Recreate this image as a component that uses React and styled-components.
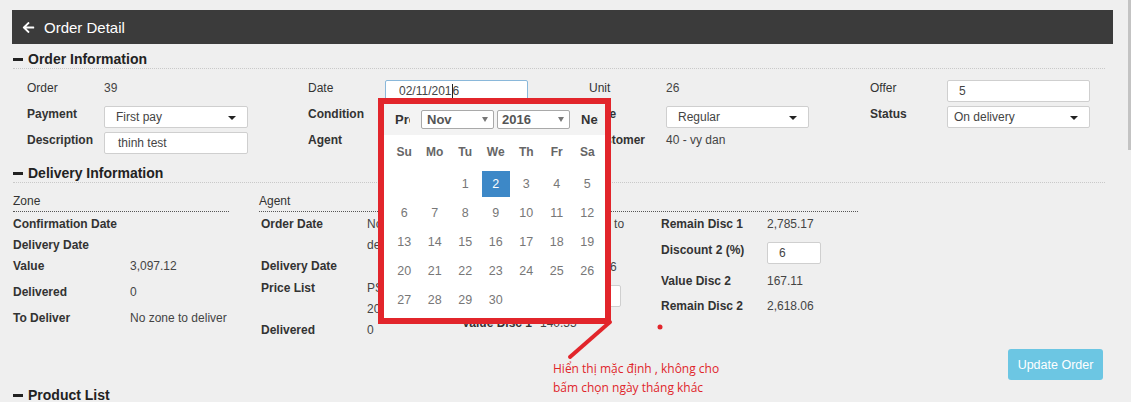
import React from "react"
import styled, { createGlobalStyle } from "styled-components"
import { FaArrowLeft } from "react-icons/fa"

const GlobalStyle = createGlobalStyle`
  html, body {
    margin: 0;
    padding: 0;
    overflow: hidden;
    background: #efefef;
  }
  body {
    font-family: "Liberation Sans", Arial, sans-serif;
    font-size: 12px;
    color: #333;
  }
`

const Page = styled.div`
  position: relative;
  width: 1131px;
  height: 402px;
  padding: 10px 18px 0 12px;
  box-sizing: border-box;
`

const TopBar = styled.div`
  display: flex;
  align-items: center;
  gap: 9px;
  height: 34px;
  padding-left: 10px;
  background: #3b3b3b;
  color: #fff;
  font-size: 15px;
`

const SectionTitle = styled.div`
  display: flex;
  align-items: center;
  gap: 5px;
  margin: ${p => p.$mt}px 8px 0 1px;
  line-height: 18px;
  font-size: 14px;
  font-weight: 700;
  color: #222;
  border-bottom: 1px dotted #c9c9c9;
`

const Minus = styled.span`
  display: inline-block;
  width: 10px;
  height: 3px;
  background: #222;
`

const OrderGrid = styled.div`
  display: grid;
  grid-template-columns: 77px 204px 77px 204px 77px 204px 77px 143px;
  grid-auto-rows: 22px;
  row-gap: 4px;
  margin: 11px 0 0 15px;
`

const Label = styled.div`
  line-height: 16px;
  font-weight: ${p => (p.$light ? 400 : 700)};
  color: #333;
`

const Value = styled.div`
  line-height: 16px;
  color: #444;
`

const Field = styled.div`
  position: relative;
  display: flex;
  align-items: center;
  width: ${p => p.$w || 143}px;
  height: 22px;
  margin-top: ${p => p.$mt || 0}px;
  padding-left: ${p => p.$pad || 11}px;
  box-sizing: border-box;
  background: #fff;
  border: 1px solid ${p => (p.$focus ? "#8ab8da" : "#cfcfcf")};
  border-radius: 2px;
  color: #444;
  white-space: nowrap;
  &::after {
    content: "";
    display: ${p => (p.$select ? "block" : "none")};
    position: absolute;
    right: 11px;
    top: 9px;
    border-left: 4px solid transparent;
    border-right: 4px solid transparent;
    border-top: 4px solid #222;
  }
`

const TextCaret = styled.span`
  display: inline-block;
  width: 1px;
  height: 14px;
  background: #222;
`

const DateCell = styled.div`
  position: relative;
`

const PickerFrame = styled.div`
  position: absolute;
  left: -7px;
  top: 18px;
  z-index: 10;
  width: 221px;
  background: #fff;
  border: 6px solid #e2252b;
`

const PickerHead = styled.div`
  display: flex;
  align-items: center;
  height: 31px;
  padding-left: 11px;
  background: #f3f3f3;
`

const NavLink = styled.span`
  width: ${p => p.$w}px;
  margin-right: ${p => p.$mr || 0}px;
  overflow: hidden;
  white-space: nowrap;
  font-size: 13px;
  font-weight: 700;
  color: #333;
`

const PickerSelect = styled.div`
  position: relative;
  width: 73px;
  height: 19px;
  margin-right: ${p => p.$mr}px;
  padding-left: ${p => p.$pad}px;
  box-sizing: border-box;
  line-height: 17px;
  background: #fff;
  border: 1px solid #a9a9a9;
  border-radius: 2px;
  font-size: 13px;
  font-weight: 700;
  color: #555;
  &::after {
    content: "";
    position: absolute;
    right: 5px;
    top: 6px;
    border-left: 3px solid transparent;
    border-right: 3px solid transparent;
    border-top: 5px solid #777;
  }
`

const WeekRow = styled.div`
  display: grid;
  grid-template-columns: repeat(7, 30.5px);
  height: 34px;
  align-items: center;
  padding-left: 5px;
  font-weight: 700;
  color: #666;
  text-align: center;
`

const DayGrid = styled.div`
  display: grid;
  grid-template-columns: repeat(7, 30.5px);
  grid-auto-rows: 29px;
  padding: 0 0 4px 5px;
`

const Day = styled.span`
  display: flex;
  align-items: center;
  justify-content: center;
  justify-self: center;
  align-self: center;
  width: 28px;
  height: 26px;
  font-size: 12.5px;
  color: ${p => (p.$active ? "#fff" : "#777")};
  background: ${p => (p.$active ? "#3d88c7" : "transparent")};
`

const Delivery = styled.div`
  display: flex;
  margin: 10px 0 0 1px;
`

const ZoneBlock = styled.div`
  width: 216px;
  margin-right: 30px;
`

const AgentBlock = styled.div`
  width: 599px;
`

const ColHead = styled.div`
  line-height: 16px;
  padding-bottom: 2px;
  margin-bottom: 2px;
  color: #333;
  border-bottom: 1px dotted #555;
`

const SubCols = styled.div`
  display: grid;
  grid-template-columns: 201px 199px 199px;
  padding-left: 2px;
`

const InfoRow = styled.div`
  display: grid;
  grid-template-columns: ${p => p.$lw}px auto;
  align-items: start;
  height: ${p => p.$h}px;
  line-height: 21px;
`

const RowLabel = styled.span`
  font-weight: 700;
  color: #333;
  white-space: nowrap;
`

const RowValue = styled.span`
  max-width: 90px;
  color: #444;
  white-space: ${p => (p.$wrap ? "normal" : "nowrap")};
`

const Actions = styled.div`
  display: flex;
  justify-content: flex-end;
  margin-top: 8px;
  padding-right: 10px;
`

const UpdateButton = styled.button`
  width: 95px;
  height: 31px;
  border: none;
  border-radius: 3px;
  background: #6cc6e3;
  color: #fff;
  font-family: "Liberation Sans", Arial, sans-serif;
  font-size: 12.5px;
`

const Markup = styled.svg`
  position: absolute;
  left: 560px;
  top: 312px;
  overflow: visible;
`

const Note = styled.div`
  position: absolute;
  left: 553px;
  top: 359px;
  line-height: 19px;
  font-family: "Open Sans", "Noto Sans", sans-serif;
  font-size: 12px;
  color: #e0262b;
`

const ScrollThumb = styled.div`
  position: absolute;
  right: 0;
  top: 0;
  width: 3px;
  height: 150px;
  background: #c3c3c3;
`

const weeks = [
  [null, null, 1, 2, 3, 4, 5],
  [6, 7, 8, 9, 10, 11, 12],
  [13, 14, 15, 16, 17, 18, 19],
  [20, 21, 22, 23, 24, 25, 26],
  [27, 28, 29, 30],
]

function DatePicker() {
  return (
    <PickerFrame>
      <PickerHead>
        <NavLink $w={15} $mr={11}>Prev</NavLink>
        <PickerSelect $mr={3} $pad={5}>Nov</PickerSelect>
        <PickerSelect $mr={11} $pad={4}>2016</PickerSelect>
        <NavLink $w={17}>Next</NavLink>
      </PickerHead>
      <WeekRow>
        {["Su", "Mo", "Tu", "We", "Th", "Fr", "Sa"].map(d => (
          <span key={d}>{d}</span>
        ))}
      </WeekRow>
      <DayGrid>
        {weeks.flat().map((d, i) => (
          <Day key={i} $active={d === 2}>{d}</Day>
        ))}
      </DayGrid>
    </PickerFrame>
  )
}

function Row({ lw, h, label, children, wrap }) {
  return (
    <InfoRow $lw={lw} $h={h}>
      <RowLabel>{label}</RowLabel>
      <RowValue $wrap={wrap}>{children}</RowValue>
    </InfoRow>
  )
}

export default function App() {
  return (
    <>
      <GlobalStyle />
      <Page>
        <TopBar>
          <FaArrowLeft size={13} />
          <span>Order Detail</span>
        </TopBar>

        <SectionTitle $mt={6}><Minus />Order Information</SectionTitle>
        <OrderGrid>
          <Label $light>Order</Label>
          <Value>39</Value>
          <Label $light>Date</Label>
          <DateCell>
            <Field $focus $pad={13}>02/11/201<TextCaret />6</Field>
            <DatePicker />
          </DateCell>
          <Label $light>Unit</Label>
          <Value>26</Value>
          <Label $light>Offer</Label>
          <Field>5</Field>

          <Label>Payment</Label>
          <Field $select $w={144}>First pay</Field>
          <Label>Condition</Label>
          <Value />
          <Label>Type</Label>
          <Field $select>Regular</Field>
          <Label>Status</Label>
          <Field $select $pad={6}>On delivery</Field>

          <Label>Description</Label>
          <Field $w={144} $pad={13}>thinh test</Field>
          <Label>Agent</Label>
          <Value />
          <Label>Customer</Label>
          <Value>40 - vy dan</Value>
        </OrderGrid>

        <SectionTitle $mt={10}><Minus />Delivery Information</SectionTitle>
        <Delivery>
          <ZoneBlock>
            <ColHead>Zone</ColHead>
            <Row lw={117} h={21} label="Confirmation Date" />
            <Row lw={117} h={21} label="Delivery Date" />
            <Row lw={117} h={26} label="Value">3,097.12</Row>
            <Row lw={117} h={26} label="Delivered">0</Row>
            <Row lw={117} h={26} label="To Deliver">No zone to deliver</Row>
          </ZoneBlock>
          <AgentBlock>
            <ColHead>Agent</ColHead>
            <SubCols>
              <div>
                <Row lw={106} h={42} label="Order Date" wrap>No date delivered</Row>
                <Row lw={106} h={22} label="Delivery Date" />
                <Row lw={106} h={42} label="Price List" wrap>PSI Price List 2016</Row>
                <Row lw={106} h={21} label="Delivered">0</Row>
              </div>
              <div>
                <Row lw={78} h={43} wrap>No zone able to deliver</Row>
                <Row lw={78} h={29}>1,858,520.676</Row>
                <InfoRow $lw={78} $h={27}>
                  <RowLabel />
                  <Field $w={81} $mt={-1} />
                </InfoRow>
                <Row lw={78} h={21} label="Value Disc 1">140.55</Row>
              </div>
              <div>
                <Row lw={106} h={26} label="Remain Disc 1">2,785.17</Row>
                <InfoRow $lw={106} $h={31}>
                  <RowLabel>Discount 2 (%)</RowLabel>
                  <Field $w={54} $mt={2}>6</Field>
                </InfoRow>
                <Row lw={106} h={25} label="Value Disc 2">167.11</Row>
                <Row lw={106} h={21} label="Remain Disc 2">2,618.06</Row>
              </div>
            </SubCols>
          </AgentBlock>
        </Delivery>

        <Actions>
          <UpdateButton>Update Order</UpdateButton>
        </Actions>

        <SectionTitle $mt={6}><Minus />Product List</SectionTitle>

        <Markup width="110" height="50">
          <line x1="50" y1="10" x2="10" y2="45" stroke="#e2252b" strokeWidth="4" strokeLinecap="round" />
          <circle cx="100" cy="15" r="2.5" fill="#e2252b" />
        </Markup>
        <Note>
          Hiển thị mặc định , không cho
          <br />
          bấm chọn ngày tháng khác
        </Note>
        <ScrollThumb />
      </Page>
    </>
  )
}
